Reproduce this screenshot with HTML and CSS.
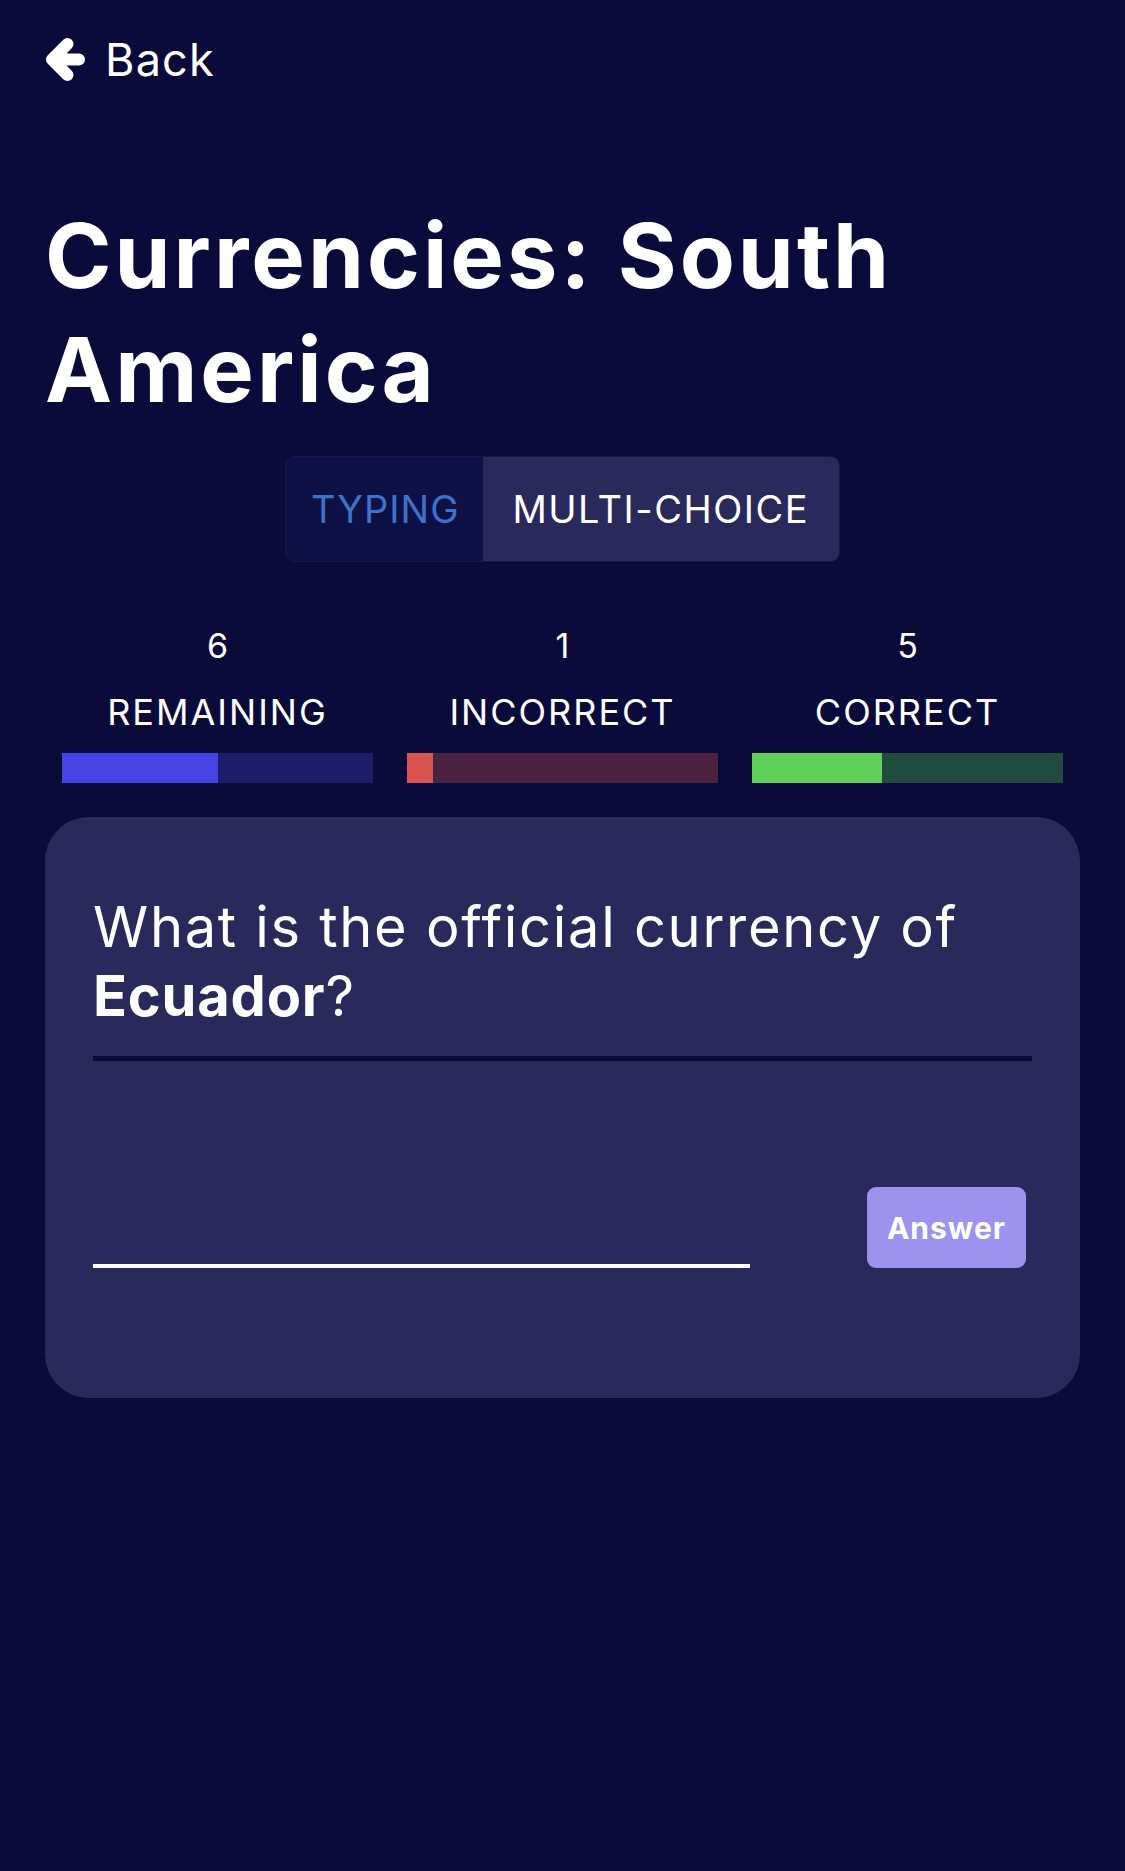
FILE: index.html
```html
<!DOCTYPE html>
<html lang="en">
<head>
<meta charset="utf-8">
<title>Currencies: South America</title>
<link rel="stylesheet" href="styles.css">
</head>
<body>
<div class="page">
  <a class="back" href="#">
    <svg class="back-icon" viewBox="0 0 40 44" width="40" height="44" aria-hidden="true">
      <path d="M21.5 6 L6 21.5 L21.5 37 M6 21.5 L33 21.5" fill="none" stroke="#fff" stroke-width="12" stroke-linecap="round" stroke-linejoin="round"/>
    </svg>
    <span>Back</span>
  </a>

  <h1 class="title">Currencies: South America</h1>

  <div class="toggle-wrap">
    <div class="toggle">
      <button class="toggle-btn active">TYPING</button>
      <button class="toggle-btn">MULTI-CHOICE</button>
    </div>
  </div>

  <div class="stats">
    <div class="stat">
      <div class="stat-num">6</div>
      <div class="stat-label">REMAINING</div>
      <div class="bar bar-remaining"><div class="fill" style="width:50%"></div></div>
    </div>
    <div class="stat">
      <div class="stat-num">1</div>
      <div class="stat-label">INCORRECT</div>
      <div class="bar bar-incorrect"><div class="fill" style="width:8.33%"></div></div>
    </div>
    <div class="stat">
      <div class="stat-num">5</div>
      <div class="stat-label">CORRECT</div>
      <div class="bar bar-correct"><div class="fill" style="width:41.67%"></div></div>
    </div>
  </div>

  <div class="card">
    <p class="question">What is the official currency of <strong>Ecuador</strong>?</p>
    <div class="divider"></div>
    <div class="answer-row">
      <input class="answer-input" type="text" aria-label="Answer">
      <button class="answer-btn">Answer</button>
    </div>
  </div>
</div>
</body>
</html>
```

FILE: styles.css
```css
html, body {
  margin: 0;
  padding: 0;
  background: #0b0b3b;
}

body {
  font-family: Inter, "Noto Sans", "Liberation Sans", sans-serif;
  color: #ffffff;
}

.page {
  padding: 0 45px;
  min-height: 1871px;
  box-sizing: border-box;
}

.back {
  display: flex;
  align-items: center;
  gap: 19px;
  padding-top: 33px;
  color: #ffffff;
  text-decoration: none;
  font-size: 45px;
  line-height: 54px;
  letter-spacing: 1.2px;
  width: max-content;
}

.back-icon {
  display: block;
  margin-left: 1px;
}

.title {
  margin: 112px 0 0;
  font-size: 90px;
  line-height: 114px;
  font-weight: 700;
  letter-spacing: 3px;
}

.toggle-wrap {
  display: flex;
  justify-content: center;
  margin-top: 29px;
}

.toggle {
  display: flex;
  border-radius: 9px;
  overflow: hidden;
  border: 1px solid rgba(255, 255, 255, 0.05);
  height: 106px;
  box-sizing: border-box;
}

.toggle-btn {
  font-family: inherit;
  font-size: 38px;
  letter-spacing: 1.5px;
  border: 0;
  padding: 0 30px;
  background: #29295c;
  color: #ffffff;
}

.toggle-btn.active {
  background: #0e1145;
  color: #3f72c9;
  padding: 0 23px 0 25px;
  letter-spacing: 1px;
}

.stats {
  display: grid;
  grid-template-columns: repeat(3, 1fr);
  margin-top: 62px;
}

.stat {
  display: flex;
  flex-direction: column;
  align-items: center;
}

.stat-num {
  font-size: 34px;
  line-height: 44px;
}

.stat-label {
  margin-top: 22px;
  font-size: 36px;
  line-height: 44px;
  letter-spacing: 2px;
}

.bar {
  align-self: stretch;
  margin: 19px 17px 0;
  height: 30px;
  display: flex;
}

.fill {
  height: 100%;
}

.bar-remaining { background: #1d1d6c; }
.bar-remaining .fill { background: #4343e6; }
.bar-incorrect { background: #4a2341; }
.bar-incorrect .fill { background: #d9534f; }
.bar-correct { background: #214a41; }
.bar-correct .fill { background: #5fd15b; }

.card {
  margin-top: 34px;
  background: #29295c;
  border-radius: 44px;
  padding: 76px 48px 130px;
}

.question {
  margin: 0;
  font-size: 56px;
  line-height: 69px;
  font-weight: 400;
  letter-spacing: 1.7px;
}

.question strong {
  font-weight: 700;
  letter-spacing: 0.8px;
}

.divider {
  margin-top: 25px;
  height: 5px;
  background: #0b0b3b;
}

.answer-row {
  display: flex;
  justify-content: space-between;
  align-items: flex-end;
  margin-top: 126px;
  padding-right: 6px;
}

.answer-input {
  width: 657px;
  height: 60px;
  box-sizing: border-box;
  background: transparent;
  border: 0;
  border-bottom: 4px solid #ffffff;
  outline: none;
  color: #ffffff;
  font-family: inherit;
  font-size: 40px;
  padding: 0;
}

.answer-btn {
  width: 159px;
  height: 81px;
  border: 0;
  border-radius: 9px;
  background: #9d93ef;
  color: #ffffff;
  font-family: inherit;
  font-size: 30px;
  font-weight: 700;
  letter-spacing: 1px;
  padding: 0;
}
```
